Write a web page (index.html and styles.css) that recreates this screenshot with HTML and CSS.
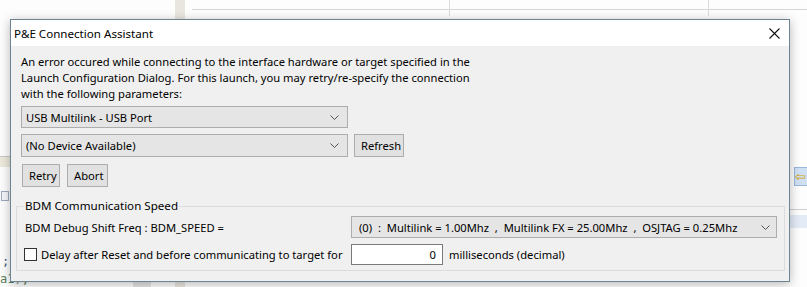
FILE: index.html
```html
<!DOCTYPE html>
<html lang="en">
<head>
    <meta charset="UTF-8">
    <title>P&amp;E Connection Assistant</title>
    <link rel="stylesheet" href="styles.css">
</head>
<body>
    <!-- IDE behind the dialog -->
    <div class="ide">
        <div class="ide-sash"></div>
        <div class="ide-rule"></div>
        <div class="ide-col col-a"></div>
        <div class="ide-col col-b"></div>
        <div class="ide-gray"></div>
        <div class="ide-left-band"></div>
        <div class="ide-left-icon"></div>
        <div class="ide-code code-a">;</div>
        <div class="ide-code code-b">a1);</div>
        <div class="ide-right-icon">&#8678;</div>
        <div class="ide-right-rule"></div>
        <div class="ide-right-band"></div>
    </div>

    <div class="dialog">
        <div class="titlebar">
            <span class="title">P&amp;E Connection Assistant</span>
            <svg class="close" width="11" height="11" viewBox="0 0 11 11">
                <path d="M0.5 0.5 L10.5 10.5 M10.5 0.5 L0.5 10.5" stroke="#111" stroke-width="1.1" fill="none"/>
            </svg>
        </div>
        <div class="content">
            <p class="msg">
                An error occured while connecting to the interface hardware or target specified in the<br>
                Launch Configuration Dialog. For this launch, you may retry/re-specify the connection<br>
                with the following parameters:
            </p>
            <div class="row">
                <div class="combo port">
                    <span>USB Multilink - USB Port</span>
                    <svg width="9" height="5" viewBox="0 0 9 5"><path d="M0.5 0.5 L4.5 4.5 L8.5 0.5" stroke="#555" fill="none"/></svg>
                </div>
            </div>
            <div class="row">
                <div class="combo port">
                    <span>(No Device Available)</span>
                    <svg width="9" height="5" viewBox="0 0 9 5"><path d="M0.5 0.5 L4.5 4.5 L8.5 0.5" stroke="#555" fill="none"/></svg>
                </div>
                <button class="btn refresh">Refresh</button>
            </div>
            <div class="row buttons">
                <button class="btn retry">Retry</button>
                <button class="btn abort">Abort</button>
            </div>

            <fieldset class="group">
                <legend>BDM Communication Speed</legend>
                <div class="group-grid">
                    <span class="label">BDM Debug Shift Freq : BDM_SPEED =</span>
                    <div class="combo speed">
                        <span>(0)  :  Multilink = 1.00Mhz  ,  Multilink FX = 25.00Mhz  ,  OSJTAG = 0.25Mhz</span>
                        <svg width="9" height="5" viewBox="0 0 9 5"><path d="M0.5 0.5 L4.5 4.5 L8.5 0.5" stroke="#555" fill="none"/></svg>
                    </div>
                    <label class="check"><span class="box"></span>Delay after Reset and before communicating to target for</label>
                    <div class="delay-row">
                        <input class="delay" type="text" value="0">
                        <span>milliseconds (decimal)</span>
                    </div>
                </div>
            </fieldset>
        </div>
    </div>
</body>
</html>
```

FILE: styles.css
```css
html, body {
    margin: 0;
    padding: 0;
}
body {
    width: 807px;
    height: 287px;
    overflow: hidden;
    position: relative;
    background-color: #fdfdfd;
    font-family: 'Segoe UI', 'Noto Sans', sans-serif;
    font-size: 11.2px;
    color: #000;
}

/* IDE backdrop */
.ide div {
    position: absolute;
}
.ide-sash {
    left: 175px;
    top: 0;
    width: 10px;
    height: 287px;
    background-color: #e9e6df;
}
.ide-rule {
    left: 192px;
    top: 9px;
    width: 615px;
    height: 1px;
    background-color: #d6d6d6;
}
.ide-col {
    top: 0;
    width: 1px;
    height: 16px;
    background-color: #dcdcdc;
}
.col-a { left: 449px; }
.col-b { left: 708px; }
.ide-gray {
    left: 133px;
    top: 282px;
    width: 18px;
    height: 5px;
    background-color: #e4e4e4;
}
.ide-left-band {
    left: 0;
    top: 156px;
    width: 10px;
    height: 10px;
    background-color: #ece8dc;
    border-top: 1px solid #c8c8c8;
}
.ide-left-icon {
    left: 1px;
    top: 191px;
    width: 6px;
    height: 8px;
    border: 1px solid #9aaac0;
    background-color: #f4f6fa;
}
.ide-code {
    left: 2px;
    font-family: 'DejaVu Sans Mono', monospace;
    font-size: 12px;
    line-height: 14px;
    color: #3f5f7f;
}
.code-a { top: 254px; }
.code-b { top: 272px; left: 0; color: #5a7f5a; }
.ide-right-icon {
    left: 794px;
    top: 167px;
    width: 14px;
    height: 17px;
    background-color: #cfe0f5;
    border: 1px solid #9bb7da;
    color: #d6a100;
    font-size: 13px;
    line-height: 16px;
}
.ide-right-rule {
    left: 789px;
    top: 209px;
    width: 18px;
    height: 1px;
    background-color: #cfcfcf;
}
.ide-right-band {
    left: 789px;
    top: 215px;
    width: 18px;
    height: 13px;
    background-color: #e3ebf7;
}

/* Dialog window */
.dialog {
    position: absolute;
    left: 10px;
    top: 19px;
    width: 778px;
    height: 261px;
    border: 1px solid #6d8593;
    background-color: #f0f0f0;
    box-shadow: 0 2px 10px rgba(0, 0, 0, 0.28);
    display: flex;
    flex-direction: column;
}
.titlebar {
    height: 26px;
    background-color: #fff;
    display: flex;
    align-items: center;
    justify-content: space-between;
    padding: 0 9px 0 3px;
}
.title {
    font-size: 11.6px;
}
.content {
    padding: 8px 4px 0 5px;
}
.msg {
    margin: 0 0 4px 5px;
    line-height: 16px;
}
.row {
    display: flex;
    gap: 6px;
    margin: 0 0 6px 5px;
}
.buttons {
    gap: 7px;
    margin-top: 7px;
    margin-left: 6px;
}
.combo {
    box-sizing: border-box;
    display: flex;
    align-items: center;
    justify-content: space-between;
    background-color: #e5e5e5;
    border: 1px solid #adadad;
    padding: 0 8px 0 4px;
    white-space: pre;
}
.port {
    width: 327px;
    height: 23px;
}
.row:first-of-type .port {
    height: 22px;
}
.btn {
    box-sizing: border-box;
    height: 23px;
    font-family: inherit;
    font-size: inherit;
    background-color: #e1e1e1;
    border: 1px solid #adadad;
    padding: 0 6px;
}
.refresh { width: 50px; }
.retry { width: 38px; }
.abort { width: 41px; }

/* BDM group */
.group {
    margin: 11px 0 0 0;
    padding: 2px 7px 5px 8px;
    border: 1px solid #dcdcdc;
    min-width: 0;
}
.group legend {
    padding: 0 1px;
    margin-left: -1px;
    line-height: 16px;
    font-size: 11.6px;
}
.group-grid {
    display: grid;
    grid-template-columns: 326px 1fr;
    row-gap: 6px;
    align-items: center;
}
.speed {
    height: 22px;
    padding-left: 7px;
    padding-right: 6px;
}
.check {
    display: flex;
    align-items: center;
    gap: 4px;
    margin-left: -1px;
}
.box {
    width: 11px;
    height: 11px;
    border: 1px solid #333;
    background-color: #fff;
}
.delay-row {
    display: flex;
    align-items: center;
    gap: 6px;
}
.delay {
    box-sizing: border-box;
    width: 92px;
    height: 21px;
    border: 1px solid #7a7a7a;
    background-color: #fff;
    text-align: right;
    font-family: inherit;
    font-size: inherit;
    padding: 0 6px;
}
```
